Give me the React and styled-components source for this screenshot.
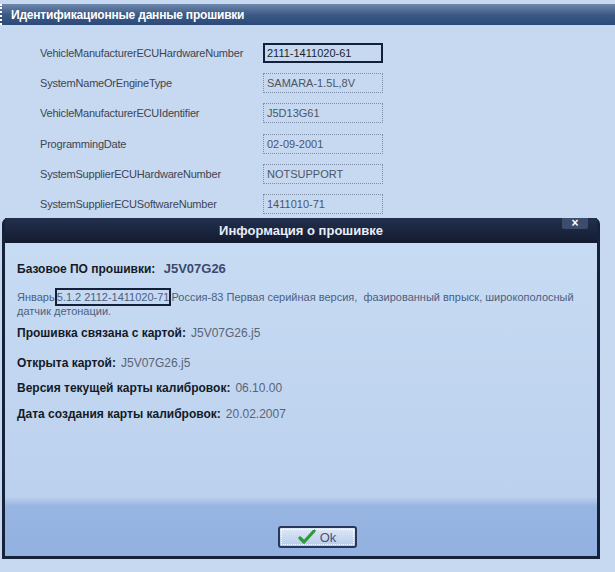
import React from 'react';
import styled, { createGlobalStyle } from 'styled-components';

const GlobalStyle = createGlobalStyle`
  html, body {
    margin: 0;
    padding: 0;
    width: 615px;
    height: 572px;
    overflow: hidden;
    background: #c5d8f0;
    font-family: "Liberation Sans", Arial, sans-serif;
  }
`;

const Page = styled.div`
  position: relative;
  width: 615px;
  height: 572px;
  background: #c6d9f1;
  padding-top: 4px;
  box-sizing: border-box;
`;

const SectionBar = styled.div`
  height: 21px;
  display: flex;
  align-items: center;
  padding-left: 9px;
  background: linear-gradient(#6f88ad, #3d5a86 50%, #2c4a78);
  color: #fff;
  font-weight: bold;
  font-size: 12px;
  letter-spacing: -0.2px;
  border-left: 2px dotted #fff;
`;

const Rows = styled.div`
  display: flex;
  flex-direction: column;
  gap: 10.2px;
  padding: 18px 0 0 40px;
`;

const Row = styled.div`
  display: flex;
  align-items: center;
  height: 20px;
`;

const Label = styled.span`
  width: 223px;
  font-size: 11px;
  color: #3f4450;
  letter-spacing: -0.2px;
`;

const Field = styled.div`
  width: 120px;
  height: 20px;
  box-sizing: border-box;
  display: flex;
  align-items: center;
  font-size: 11px;
  color: ${p => (p.$active ? '#1a1f2a' : '#4c5566')};
  border: ${p => (p.$active ? '2px solid #14203a' : '1px dotted #7f8ea8')};
  padding-left: ${p => (p.$active ? '2px' : '3px')};
`;

const Dialog = styled.div`
  position: absolute;
  left: 2px;
  top: 218px;
  width: 598px;
  height: 341px;
  box-sizing: border-box;
  display: flex;
  flex-direction: column;
  background: #16213a;
  border-radius: 6px 6px 0 0;
  padding: 0 3px 3px 3px;
`;

const TitleBar = styled.div`
  position: relative;
  height: 25px;
  display: flex;
  align-items: center;
  justify-content: center;
  color: #e8eef8;
  font-size: 13px;
  font-weight: bold;
  background: linear-gradient(#23304d, #121b30);
`;

const CloseTab = styled.div`
  position: absolute;
  right: 9px;
  top: 0;
  width: 26px;
  height: 11px;
  background: #3b4c6c;
  border-radius: 0 0 2px 2px;
  color: #fff;
  font-size: 12px;
  line-height: 11px;
  text-align: center;
  font-weight: bold;
`;

const Body = styled.div`
  flex: 1;
  display: flex;
  flex-direction: column;
  background: linear-gradient(#c7dbf3 0%, #bcd1ee 81%, #98b5e2 84%, #92b1e0 100%);
  padding: 19px 12px 0 12px;
`;

const Info = styled.div`
  font-size: 12px;
  color: #5a6478;
  margin-bottom: ${p => p.$gap || 13}px;
  line-height: 14px;
`;

const Key = styled.span`
  font-weight: bold;
  color: #141a26;
  margin-right: 5px;
`;

const BigValue = styled.span`
  font-weight: bold;
  color: #3a4a6e;
  font-size: 13px;
`;

const Desc = styled.div`
  font-size: 11px;
  color: #4c6080;
  line-height: 14px;
  margin-bottom: 8px;
  padding-right: 6px;
`;

const Boxed = styled.span`
  border: 2px solid #14203a;
  padding: 1px 0;
`;

const Footer = styled.div`
  margin-top: auto;
  display: flex;
  justify-content: center;
  padding: 0 0 8px 32px;
`;

const OkButton = styled.button`
  width: 79px;
  height: 22px;
  display: flex;
  align-items: center;
  justify-content: center;
  gap: 4px;
  border: 2px solid #2a3858;
  outline: 1px dotted #fff;
  outline-offset: -4px;
  border-radius: 3px;
  background: linear-gradient(#dfe9f7, #b7cbe9);
  font-family: "Liberation Sans", Arial, sans-serif;
  font-size: 13px;
  color: #4a5570;
  padding: 0;
`;

const rows = [
  ['VehicleManufacturerECUHardwareNumber', '2111-1411020-61', true],
  ['SystemNameOrEngineType', 'SAMARA-1.5L,8V'],
  ['VehicleManufacturerECUIdentifier', 'J5D13G61'],
  ['ProgrammingDate', '02-09-2001'],
  ['SystemSupplierECUHardwareNumber', 'NOTSUPPORT'],
  ['SystemSupplierECUSoftwareNumber', '1411010-71'],
];

export default function App() {
  return (
    <Page>
      <GlobalStyle />
      <SectionBar>Идентификационные данные прошивки</SectionBar>
      <Rows>
        {rows.map(([label, value, active]) => (
          <Row key={label}>
            <Label>{label}</Label>
            <Field $active={active}>{value}</Field>
          </Row>
        ))}
      </Rows>

      <Dialog>
        <TitleBar>
          Информация о прошивке
          <CloseTab>×</CloseTab>
        </TitleBar>
        <Body>
          <Info $gap={14}>
            <Key>Базовое ПО прошивки:</Key> <BigValue>J5V07G26</BigValue>
          </Info>
          <Desc>
            Январь<Boxed>5.1.2 2112-1411020-71</Boxed>Россия-83 Первая серийная версия,&nbsp; фазированный впрыск, широкополосный датчик детонации.
          </Desc>
          <Info $gap={16}>
            <Key>Прошивка связана с картой:</Key>J5V07G26.j5
          </Info>
          <Info $gap={11}>
            <Key>Открыта картой:</Key>J5V07G26.j5
          </Info>
          <Info $gap={12}>
            <Key>Версия текущей карты калибровок:</Key>06.10.00
          </Info>
          <Info>
            <Key>Дата создания карты калибровок:</Key>20.02.2007
          </Info>
          <Footer>
            <OkButton>
              <svg width="18" height="16" viewBox="0 0 18 16">
                <path d="M2 9 L6 13 L16 2" fill="none" stroke="#2e9a3a" strokeWidth="3.2" strokeLinecap="round" strokeLinejoin="round" />
              </svg>
              Ok
            </OkButton>
          </Footer>
        </Body>
      </Dialog>
    </Page>
  );
}
